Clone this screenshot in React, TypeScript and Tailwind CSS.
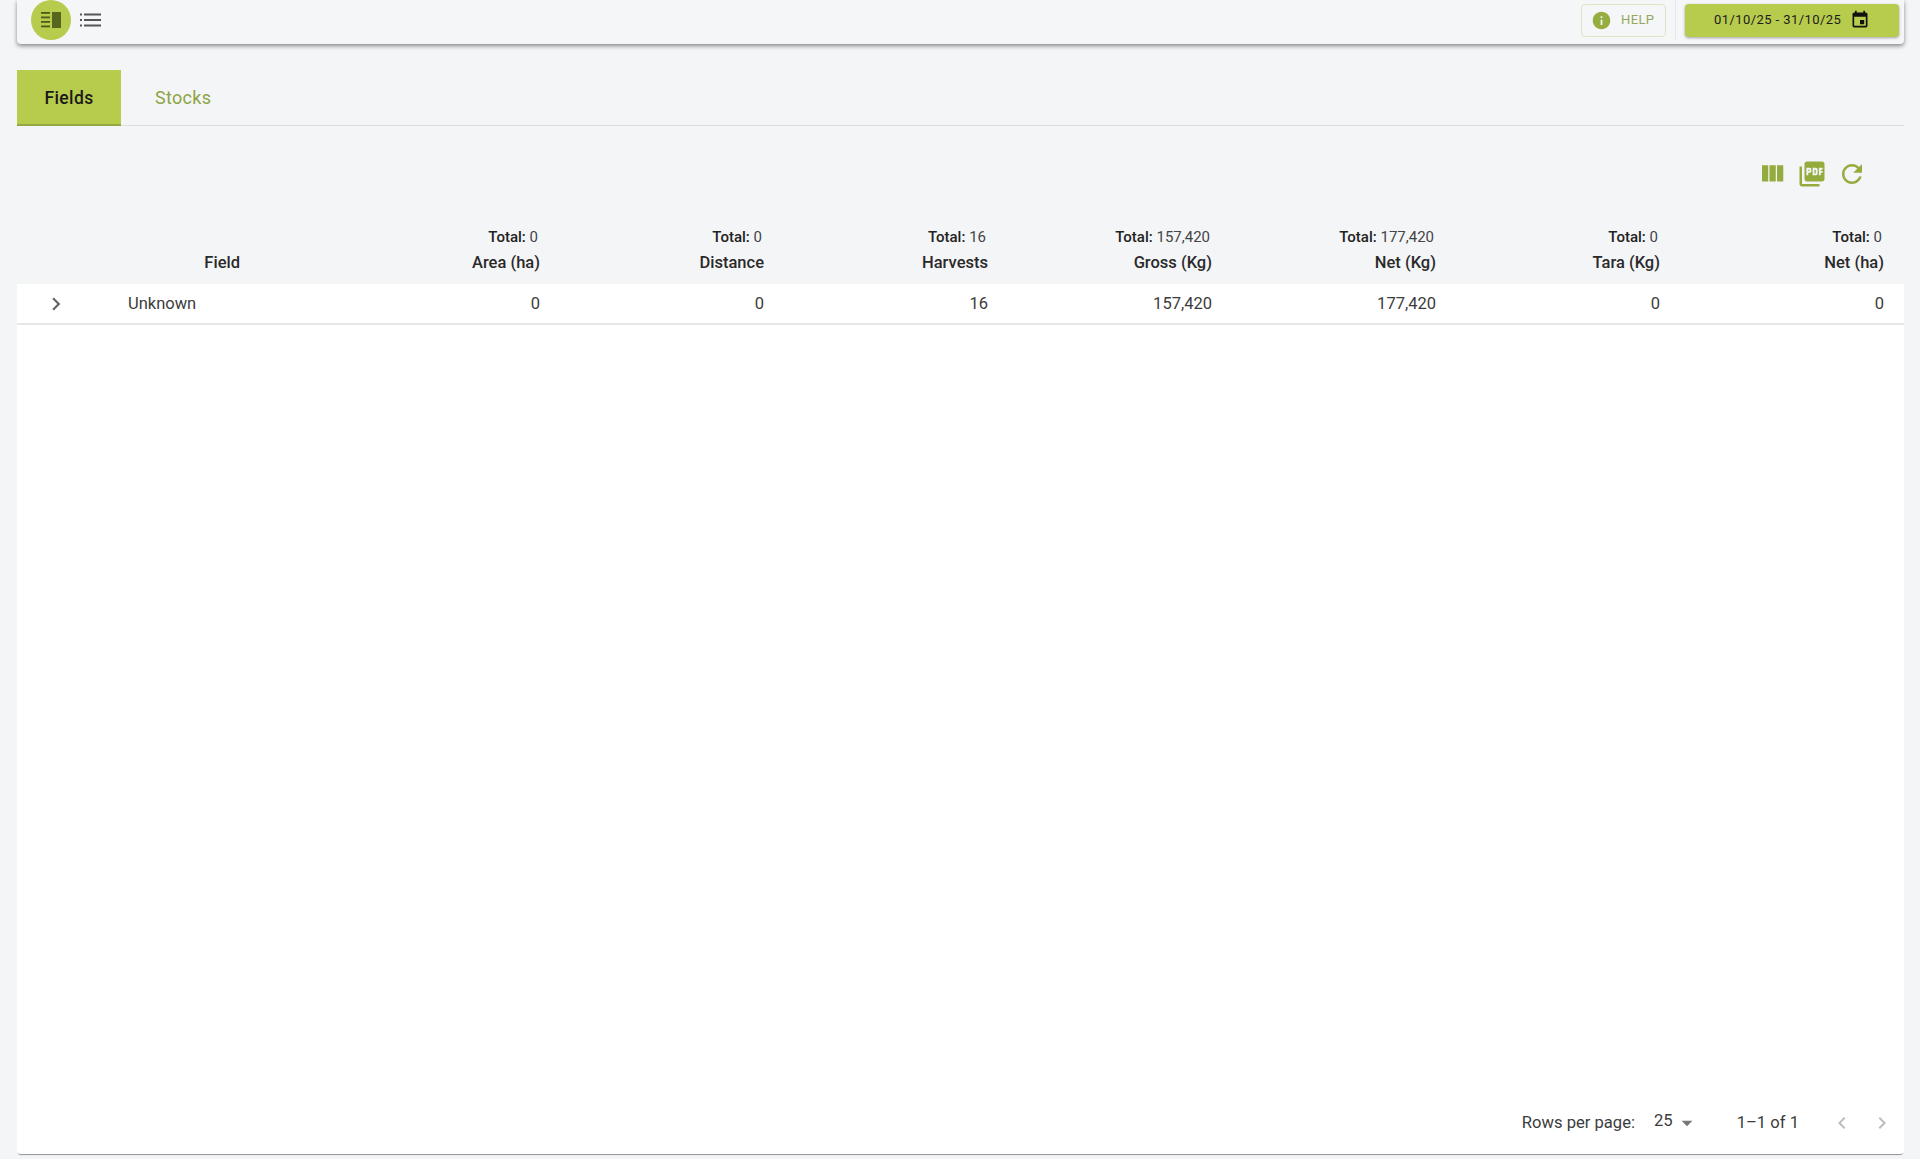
import React from 'react';

const font = "font-['Roboto',sans-serif]";

const columns = [
  { label: 'Area (ha)', total: '0', value: '0' },
  { label: 'Distance', total: '0', value: '0' },
  { label: 'Harvests', total: '16', value: '16' },
  { label: 'Gross (Kg)', total: '157,420', value: '157,420' },
  { label: 'Net (Kg)', total: '177,420', value: '177,420' },
  { label: 'Tara (Kg)', total: '0', value: '0' },
  { label: 'Net (ha)', total: '0', value: '0' },
];

function Icon({ d, className }: { d: string; className: string }) {
  return (
    <svg viewBox="0 0 24 24" fill="currentColor" className={className}>
      <path d={d} />
    </svg>
  );
}

function SidebarIcon() {
  return (
    <svg viewBox="0 0 24 24" fill="currentColor" className="w-[24px] h-[24px] text-[#4d5a1c]">
      <rect x="2" y="4" width="9" height="1.8" />
      <rect x="2" y="8.5" width="9" height="1.8" />
      <rect x="2" y="13" width="9" height="1.8" />
      <rect x="2" y="17.5" width="9" height="1.8" />
      <rect x="13" y="4" width="9" height="16" fill="#56661f" />
    </svg>
  );
}

function ListIcon() {
  return (
    <svg viewBox="0 0 24 24" fill="currentColor" className="w-[24px] h-[24px] text-[#555]">
      <rect x="1" y="5.5" width="2" height="2" />
      <rect x="1" y="11" width="2" height="2" />
      <rect x="1" y="16.5" width="2" height="2" />
      <rect x="5" y="5.5" width="17" height="2" />
      <rect x="5" y="11" width="17" height="2" />
      <rect x="5" y="16.5" width="17" height="2" />
    </svg>
  );
}

function Toolbar() {
  return (
    <div className="h-[44px] flex items-center rounded-b-[4px] bg-[#f5f6f8] shadow-[0_2px_4px_rgba(0,0,0,0.45)] pl-[14px] pr-[5px] pb-[4px]">
      <div className="w-[40px] h-[40px] rounded-full bg-[#b7cb4c] flex items-center justify-center">
        <SidebarIcon />
      </div>
      <div className="ml-[8px] flex items-center">
        <ListIcon />
      </div>
      <div className="flex-1" />
      <button className="w-[85px] h-[33px] rounded-[4px] border border-[#dfe5c4] flex items-center pl-[9px]">
        <Icon d="M12 2C6.48 2 2 6.48 2 12s4.48 10 10 10 10-4.48 10-10S17.52 2 12 2zm1 15h-2v-6h2v6zm0-8h-2V7h2v2z" className="w-[21px] h-[21px] text-[#96ad3f]" />
        <span className="ml-[9px] text-[13px] tracking-[0.4px] text-[#94a85a]">HELP</span>
      </button>
      <div className="w-px h-[40px] bg-[#e6e7e9] ml-[9px] mr-[9px]" />
      <button className="w-[214px] h-[33px] rounded-[4px] bg-[#b7cb4c] shadow-[0_1px_3px_rgba(0,0,0,0.35)] flex items-center pl-[29px]">
        <span className="text-[13px] tracking-[0.42px] text-[#1c1c1c]">01/10/25 - 31/10/25</span>
        <Icon d="M17 12h-5v5h5v-5zM16 1v2H8V1H6v2H5c-1.11 0-1.99.9-1.99 2L3 19c0 1.1.89 2 2 2h14c1.1 0 2-.9 2-2V5c0-1.1-.9-2-2-2h-1V1h-2zm3 18H5V8h14v11z" className="ml-[9px] w-[20px] h-[20px] text-[#111]" />
      </button>
    </div>
  );
}

function Tabs() {
  return (
    <div className="mt-[26px] h-[56px] flex border-b border-[#dcdde0]">
      <div className="w-[104px] h-[56px] pt-[2px] bg-[#b7cb4c] border-b-[2px] border-[#93a83f] flex items-center justify-center text-[17.5px] font-medium tracking-[0.4px] text-[#1a1a1a]">
        Fields
      </div>
      <div className="ml-[34px] h-[55px] flex items-center text-[18px] tracking-[0.3px] text-[#8da445]">
        Stocks
      </div>
    </div>
  );
}

function Actions() {
  return (
    <div className="h-[74px] flex items-center justify-end gap-[10px] pr-[37px] pt-[22px] text-[#94ab3e]">
      <Icon d="M10 18h5V5h-5v13zm-6 0h5V5H4v13zM16 5v13h5V5h-5z" className="w-[30px] h-[30px]" />
      <Icon d="M20 2H8c-1.1 0-2 .9-2 2v12c0 1.1.9 2 2 2h12c1.1 0 2-.9 2-2V4c0-1.1-.9-2-2-2zm-8.5 7.5c0 .83-.67 1.5-1.5 1.5H9v2H7.5V7H10c.83 0 1.5.67 1.5 1.5v1zm5 2c0 .83-.67 1.5-1.5 1.5h-2.5V7H15c.83 0 1.5.67 1.5 1.5v3zm4-3H19v1h1.5V11H19v2h-1.5V7h3v1.5zM9 9.5h1v-1H9v1zM4 6H2v14c0 1.1.9 2 2 2h14v-2H4V6zm10 5.5h1v-3h-1v3z" className="w-[30px] h-[30px]" />
      <Icon d="M17.65 6.35C16.2 4.9 14.21 4 12 4c-4.42 0-7.99 3.58-7.99 8s3.57 8 7.99 8c3.73 0 6.84-2.55 7.73-6h-2.08c-.82 2.33-3.04 4-5.65 4-3.31 0-6-2.69-6-6s2.69-6 6-6c1.66 0 3.14.69 4.22 1.78L13 11h7V4l-2.35 2.35z" className="w-[30px] h-[30px]" />
    </div>
  );
}

function DataTable() {
  return (
    <div>
      <div className="h-[84px] grid grid-cols-[95px_144px_300px_repeat(6,224px)] items-end">
        <div />
        <div className="pr-[16px] pb-[11px] text-right text-[16.5px] font-medium text-[#2a2a2a] leading-[20px]">Field</div>
        {columns.map((col) => (
          <div key={col.label} className="pr-[16px] pb-[11px] text-right">
            <div className="pr-[2px] text-[15px] leading-[18px] mb-[7px] text-[#444]">
              <span className="font-medium text-[#222]">Total:</span> {col.total}
            </div>
            <div className="text-[16.5px] font-medium text-[#2a2a2a] leading-[20px]">{col.label}</div>
          </div>
        ))}
      </div>
      <div className="h-[41px] bg-white border-b-[2px] border-[#e6e7e9] grid grid-cols-[95px_144px_300px_repeat(6,224px)] items-center text-[16.5px] text-[#3c3c3c]">
        <div className="flex justify-center pr-[17px]">
          <Icon d="M10 6 8.59 7.41 13.17 12l-4.58 4.59L10 18l6-6z" className="w-[26px] h-[26px] text-[#666]" />
        </div>
        <div className="pl-[16px] pt-[2px]">Unknown</div>
        {columns.map((col) => (
          <div key={col.label} className="pr-[16px] pt-[2px] text-right">{col.value}</div>
        ))}
      </div>
    </div>
  );
}

function Footer() {
  return (
    <div className="flex-1 bg-white rounded-b-[4px] shadow-[0_2px_1px_-1px_rgba(0,0,0,0.4)] flex items-end justify-end pb-[19px] pr-[10px] text-[16.6px] text-[#3c3c3c]">
      <div className="flex items-center h-[24px]">
        <span>Rows per page:</span>
        <span className="ml-[19px] -mt-[3px]">25</span>
        <Icon d="M7 10l5 5 5-5z" className="ml-[1px] w-[26px] h-[26px] text-[#777]" />
        <span className="ml-[37px]">1–1 of 1</span>
        <Icon d="M15.41 7.41 14 6l-6 6 6 6 1.41-1.41L10.83 12z" className="ml-[31px] w-[24px] h-[24px] text-[#bdbdbd]" />
        <Icon d="M10 6 8.59 7.41 13.17 12l-4.58 4.59L10 18l6-6z" className="ml-[16px] w-[24px] h-[24px] text-[#bdbdbd]" />
      </div>
    </div>
  );
}

export default function App() {
  return (
    <div className={`${font} h-[1159px] overflow-hidden bg-[#f4f5f7] pl-[17px] pr-[16px] pb-[5px] flex flex-col`}>
      <Toolbar />
      <Tabs />
      <Actions />
      <DataTable />
      <Footer />
    </div>
  );
}
